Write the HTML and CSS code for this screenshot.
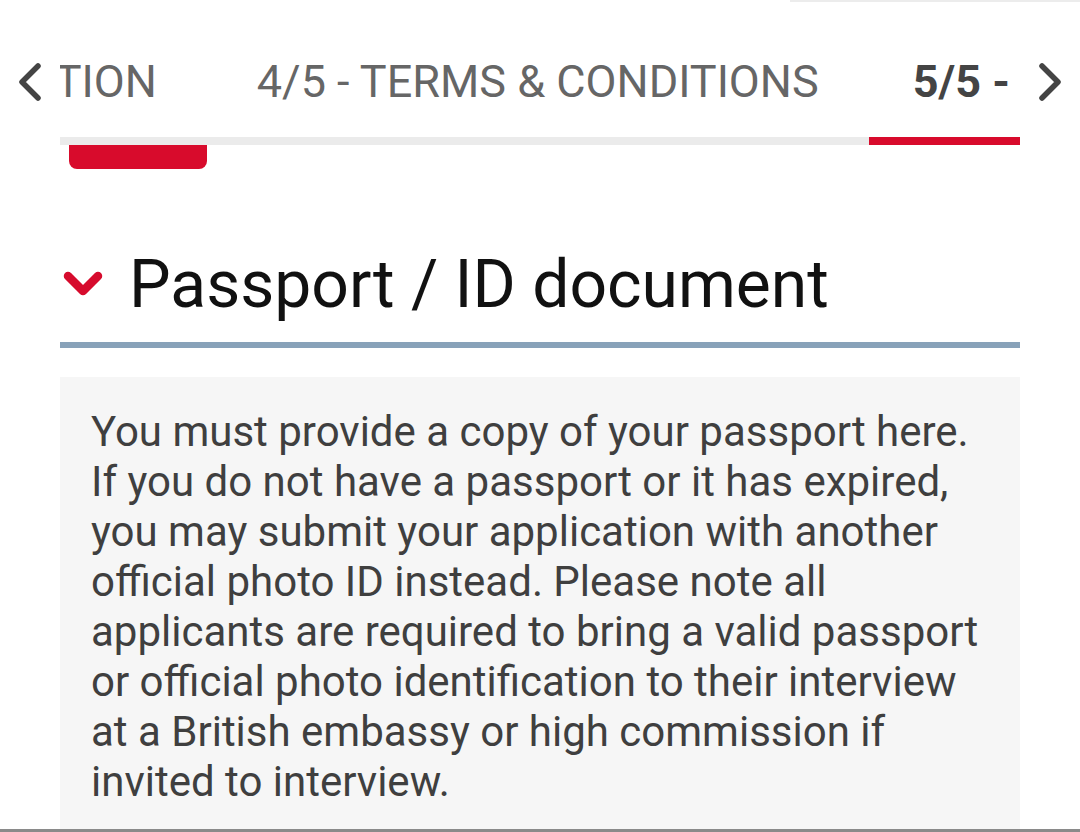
FILE: index.html
```html
<!DOCTYPE html>
<html lang="en">
<head>
    <meta charset="UTF-8">
    <meta name="viewport" content="width=device-width, initial-scale=1.0">
    <title>Passport / ID document</title>
    <link rel="stylesheet" href="styles.css">
</head>
<body>
    <div class="top-edge"></div>
    <nav class="steps">
        <button class="step-arrow" aria-label="Previous">
            <svg width="28" height="40" viewBox="0 0 28 40"><path d="M22 4 L6 20 L22 36" fill="none" stroke="#444" stroke-width="5.5" stroke-linecap="round" stroke-linejoin="round"/></svg>
        </button>
        <div class="steps-viewport">
            <div class="steps-strip">
                <span class="step">3/5 - SUPPORTING INFORMATION</span>
                <span class="step">4/5 - TERMS &amp; CONDITIONS</span>
                <span class="step active">5/5 - DOCUMENTS</span>
            </div>
        </div>
        <button class="step-arrow" aria-label="Next">
            <svg width="28" height="40" viewBox="0 0 28 40"><path d="M6 4 L22 20 L6 36" fill="none" stroke="#444" stroke-width="5.5" stroke-linecap="round" stroke-linejoin="round"/></svg>
        </button>
    </nav>
    <div class="progress-pill"></div>

    <main>
        <h2 class="section-title">
            <svg class="section-toggle" width="42" height="30" viewBox="0 0 42 30"><path d="M6 6 L21 21 L36 6" fill="none" stroke="#d60b2d" stroke-width="8.5" stroke-linecap="round" stroke-linejoin="round"/></svg>
            Passport / ID document
        </h2>
        <div class="section-body">
            <p>You must provide a copy of your passport here. If you do not have a passport or it has expired, you may submit your application with another official photo ID instead. Please note all applicants are required to bring a valid passport or official photo identification to their interview at a British embassy or high commission if invited to interview.</p>
        </div>
    </main>
    <div class="screen-edge"></div>
</body>
</html>
```

FILE: styles.css
```css
body {
    font-family: Roboto, "Noto Sans", Arial, sans-serif;
    margin: 0;
    padding: 0;
    background-color: #fff;
    color: #111;
    overflow: hidden;
    height: 832px;
}
.top-edge {
    margin-left: 790px;
    height: 2px;
    background-color: #ececec;
}
.steps {
    display: flex;
    align-items: flex-start;
    padding-top: 53px;
}
.step-arrow {
    width: 60px;
    height: 53px;
    padding: 0;
    border: none;
    background: none;
    display: flex;
    align-items: center;
    justify-content: center;
}
.steps-viewport {
    width: 960px;
    overflow: hidden;
}
.steps-strip {
    display: flex;
    margin-left: -636px;
    box-shadow: inset 0 -8px 0 #ebebeb;
}
.step {
    flex-shrink: 0;
    white-space: nowrap;
    font-size: 45px;
    line-height: 53px;
    color: #666;
    padding: 0 50px 29px;
    border-bottom: 8px solid transparent;
}
.step.active {
    color: #444;
    font-weight: bold;
    padding-left: 44px;
    border-bottom-color: #d80b2c;
}
.progress-pill {
    margin-left: 69px;
    width: 138px;
    height: 24px;
    background-color: #d80b2c;
    border-radius: 0 0 8px 8px;
}
main {
    margin: 0 60px;
}
.section-title {
    display: flex;
    align-items: center;
    gap: 25px;
    margin: 77px 0 0;
    padding-bottom: 19px;
    font-size: 66px;
    line-height: 77px;
    font-weight: normal;
    color: #111;
    border-bottom: 6px solid #88a2b9;
}
.section-toggle {
    margin-left: 2px;
}
.section-body {
    margin-top: 29px;
    background-color: #f6f6f6;
    padding: 30px 31px 60px;
}
.section-body p {
    margin: 0;
    font-size: 42px;
    line-height: 50px;
    color: #3f3f3f;
}
.screen-edge {
    position: fixed;
    left: 0;
    right: 0;
    bottom: 0;
    height: 3px;
    background-color: #8a8a8a;
}
```
